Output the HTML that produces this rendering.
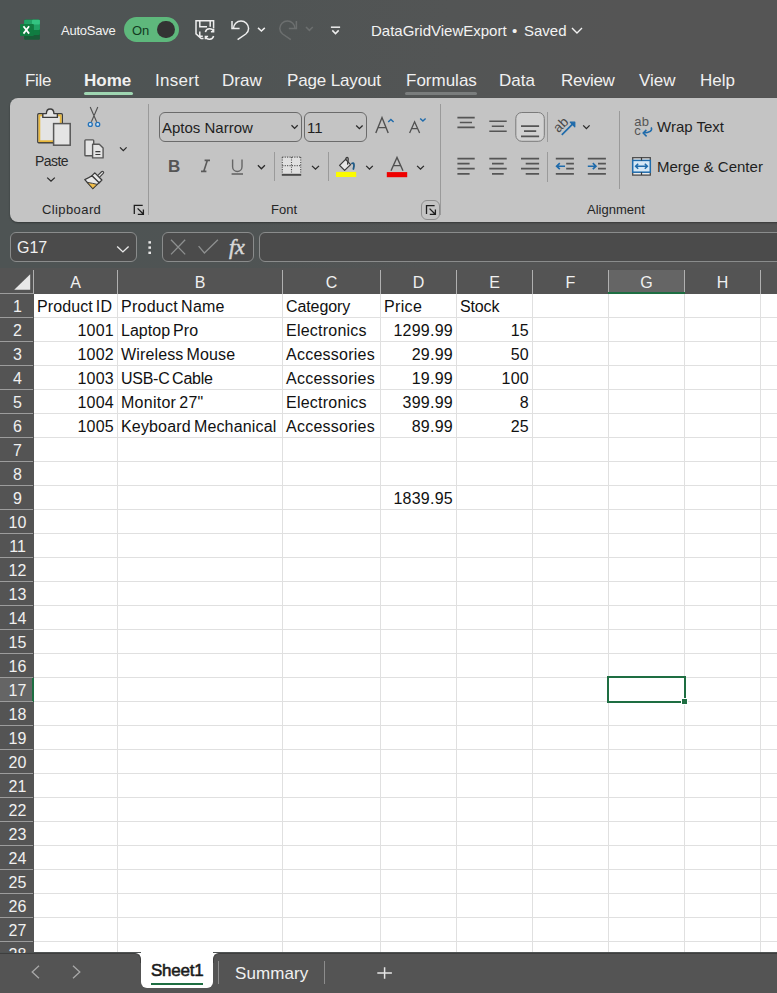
<!DOCTYPE html>
<html><head><meta charset="utf-8">
<style>
*{margin:0;padding:0;box-sizing:border-box}
html,body{width:777px;height:993px;overflow:hidden;background:#4f5353;font-family:"Liberation Sans",sans-serif}
.a{position:absolute;white-space:nowrap}
svg{position:absolute;overflow:visible}
#top{position:absolute;left:0;top:0;width:777px;height:268px;background:linear-gradient(90deg,#4e5454 0px,#4f5454 230px,#535555 450px,#555555 620px,#555555 777px)}
.tab{position:absolute;color:#f0f0f0;font-size:17px;top:71px;white-space:nowrap}
#ribbon{position:absolute;left:10px;top:98px;width:800px;height:124px;background:#c4c4c4;border-radius:8px;box-shadow:0 1px 2px rgba(0,0,0,0.35)}
.rl{position:absolute;color:#262626;font-size:13px;white-space:nowrap}
.rt{position:absolute;color:#1f1f1f;font-size:15px;white-space:nowrap}
.sep{position:absolute;width:1px;background:#9a9a9a}
#grid{position:absolute;left:0;top:270px;width:777px;height:682px;background:#fff}
.vl{position:absolute;top:294px;height:658px;width:1px;background:#e0e0e0}
.hl{position:absolute;left:34px;width:743px;height:1px;background:#e0e0e0}
#colhdr{position:absolute;left:0;top:268px;width:777px;height:26px;background:#545454}
#rowhdr{position:absolute;left:0;top:268px;width:34px;height:684px;background:#545454}
.ch{position:absolute;top:270px;height:24px;color:#f0f0f0;font-size:16px;text-align:center;line-height:26px}
.ch.sel{background:#656565}
.hs{position:absolute;top:270px;height:24px;width:1px;background:#b0b0b0}
.rh{position:absolute;left:1px;width:33px;height:24px;color:#f0f0f0;font-size:16px;text-align:center;line-height:26px}
.rhs{position:absolute;left:0;width:33px;height:1px;background:#9c9c9c}
.c{position:absolute;font-size:16px;color:#111;line-height:24px;white-space:nowrap;letter-spacing:0.25px}
.c.r{text-align:right}
#tabs{position:absolute;left:0;top:952px;width:777px;height:41px;background:#545454}
</style></head><body>
<div id="top"></div>

<!-- title bar -->
<svg style="left:19px;top:19px" width="22" height="22" viewBox="19 19 22 22">
  <rect x="24.1" y="19.8" width="15.8" height="19.9" rx="1.2" fill="#185c37"/>
  <rect x="24.1" y="19.8" width="15.8" height="15.2" rx="1.2" fill="#107c41"/>
  <rect x="24.1" y="19.8" width="15.8" height="10.2" rx="1.2" fill="#21a366"/>
  <rect x="32" y="19.8" width="7.9" height="4.8" rx="1" fill="#33c481"/>
  <rect x="20" y="23.9" width="13.9" height="12.1" rx="1" fill="#107c41"/>
  <path d="M23.5 26.2 L29.1 33.6 M29.1 26.2 L23.5 33.6" stroke="#ffffff" stroke-width="1.75"/>
</svg>
<div class="a" style="left:61px;top:23px;font-size:13px;color:#f2f2f2;letter-spacing:-0.25px">AutoSave</div>
<div class="a" style="left:124px;top:17px;width:55px;height:25px;border-radius:12.5px;background:#5eb87c"></div>
<div class="a" style="left:132px;top:23px;font-size:13px;color:#123c22">On</div>
<div class="a" style="left:157.3px;top:20.8px;width:17.6px;height:17.6px;border-radius:50%;background:#333333"></div>


<svg style="left:192px;top:17px" width="160" height="26" viewBox="192 17 160 26">
  <g stroke="#eeeeee" stroke-width="1.5" fill="none" stroke-linejoin="miter">
    <path d="M203.5 38.6 L201.2 38.6 L196 33.8 V20.8 H213.6 V28.5"/>
    <path d="M199.8 20.8 V26.8 H207 M210.2 20.8 V26.8"/>
    <path d="M199.8 31.5 V36.2 H202.8"/>
    <path d="M205.4 32.2 A4.3 4.3 0 0 1 213.6 31.6 M213.6 29 V31.8 H210.9"/>
    <path d="M213.6 36 A4.3 4.3 0 0 1 205.4 36.6 M205.4 39.2 V36.4 H208.1"/>
  </g>
  <g stroke="#eeeeee" stroke-width="1.5" fill="none">
    <path d="M232 21 V28.6 H239.6"/>
    <path d="M233.4 28.6 A7.6 7.6 0 0 1 248.6 28.6 C248.6 30.8 247.6 32.6 245.8 34 L237.6 39.6"/>
    <path d="M258 27.9 L261.4 31 L264.8 27.9"/>
  </g>
  <g stroke="#6c6f6f" stroke-width="1.5" fill="none">
    <path d="M296.4 21 V28.6 H288.8"/>
    <path d="M295 28.6 A7.6 7.6 0 0 0 279.8 28.6 C279.8 30.8 280.8 32.6 282.6 34 L290.8 39.6"/>
    <path d="M306 27 L309.4 30.4 L312.8 27"/>
  </g>
  <g stroke="#eeeeee" stroke-width="1.5" fill="none">
    <path d="M330.9 27.2 H340.1"/>
    <path d="M332.3 30.4 L335.5 33.6 L338.7 30.4"/>
  </g>
</svg>
<div class="a" style="left:371px;top:22px;font-size:15px;color:#f2f2f2">DataGridViewExport</div>
<div class="a" style="left:512px;top:22px;font-size:15px;color:#f2f2f2">&#8226;</div>
<div class="a" style="left:524px;top:22px;font-size:15px;color:#f2f2f2">Saved</div>
<svg style="left:571px;top:27px" width="12" height="7" viewBox="0 0 12 7"><path d="M1 1 L6 6 L11 1" stroke="#f2f2f2" stroke-width="1.4" fill="none"/></svg>

<div class="tab" style="left:25px;letter-spacing:-0.3px">File</div>
<div class="tab" style="left:84px;font-weight:700">Home</div>
<div class="a" style="left:84px;top:92px;width:49px;height:3px;border-radius:2px;background:#9fd6b2"></div>
<div class="tab" style="left:155px;letter-spacing:0.3px">Insert</div>
<div class="tab" style="left:222px">Draw</div>
<div class="tab" style="left:287px;letter-spacing:-0.15px">Page Layout</div>
<div class="tab" style="left:406px">Formulas</div>
<div class="a" style="left:405px;top:92px;width:72px;height:3px;border-radius:2px;background:#7a7d7d"></div>
<div class="tab" style="left:499px">Data</div>
<div class="tab" style="left:561px;letter-spacing:-0.4px">Review</div>
<div class="tab" style="left:639px">View</div>
<div class="tab" style="left:700px">Help</div>
<div id="grid"></div>
<div id="colhdr"></div>
<div id="rowhdr"></div>
<div class="vl" style="left:117px"></div>
<div class="vl" style="left:282px"></div>
<div class="vl" style="left:380px"></div>
<div class="vl" style="left:456px"></div>
<div class="vl" style="left:532px"></div>
<div class="vl" style="left:608px"></div>
<div class="vl" style="left:684px"></div>
<div class="vl" style="left:760px"></div>
<div class="hl" style="top:317px"></div>
<div class="hl" style="top:341px"></div>
<div class="hl" style="top:365px"></div>
<div class="hl" style="top:389px"></div>
<div class="hl" style="top:413px"></div>
<div class="hl" style="top:437px"></div>
<div class="hl" style="top:461px"></div>
<div class="hl" style="top:485px"></div>
<div class="hl" style="top:509px"></div>
<div class="hl" style="top:533px"></div>
<div class="hl" style="top:557px"></div>
<div class="hl" style="top:581px"></div>
<div class="hl" style="top:605px"></div>
<div class="hl" style="top:629px"></div>
<div class="hl" style="top:653px"></div>
<div class="hl" style="top:677px"></div>
<div class="hl" style="top:701px"></div>
<div class="hl" style="top:725px"></div>
<div class="hl" style="top:749px"></div>
<div class="hl" style="top:773px"></div>
<div class="hl" style="top:797px"></div>
<div class="hl" style="top:821px"></div>
<div class="hl" style="top:845px"></div>
<div class="hl" style="top:869px"></div>
<div class="hl" style="top:893px"></div>
<div class="hl" style="top:917px"></div>
<div class="hl" style="top:941px"></div>
<div class="hl" style="top:965px"></div>
<div class="rh" style="top:294px">1</div>
<div class="rh" style="top:318px">2</div>
<div class="rh" style="top:342px">3</div>
<div class="rh" style="top:366px">4</div>
<div class="rh" style="top:390px">5</div>
<div class="rh" style="top:414px">6</div>
<div class="rh" style="top:438px">7</div>
<div class="rh" style="top:462px">8</div>
<div class="rh" style="top:486px">9</div>
<div class="rh" style="top:510px">10</div>
<div class="rh" style="top:534px">11</div>
<div class="rh" style="top:558px">12</div>
<div class="rh" style="top:582px">13</div>
<div class="rh" style="top:606px">14</div>
<div class="rh" style="top:630px">15</div>
<div class="rh" style="top:654px">16</div>
<div class="a" style="left:0;top:678px;width:34px;height:24px;background:#656565"></div>
<div class="a" style="left:32px;top:678px;width:2px;height:24px;background:#1e6e42"></div>
<div class="rh" style="top:678px">17</div>
<div class="rh" style="top:702px">18</div>
<div class="rh" style="top:726px">19</div>
<div class="rh" style="top:750px">20</div>
<div class="rh" style="top:774px">21</div>
<div class="rh" style="top:798px">22</div>
<div class="rh" style="top:822px">23</div>
<div class="rh" style="top:846px">24</div>
<div class="rh" style="top:870px">25</div>
<div class="rh" style="top:894px">26</div>
<div class="rh" style="top:918px">27</div>
<div class="rh" style="top:942px">28</div>
<div class="rhs" style="top:293px"></div>
<div class="rhs" style="top:317px"></div>
<div class="rhs" style="top:341px"></div>
<div class="rhs" style="top:365px"></div>
<div class="rhs" style="top:389px"></div>
<div class="rhs" style="top:413px"></div>
<div class="rhs" style="top:437px"></div>
<div class="rhs" style="top:461px"></div>
<div class="rhs" style="top:485px"></div>
<div class="rhs" style="top:509px"></div>
<div class="rhs" style="top:533px"></div>
<div class="rhs" style="top:557px"></div>
<div class="rhs" style="top:581px"></div>
<div class="rhs" style="top:605px"></div>
<div class="rhs" style="top:629px"></div>
<div class="rhs" style="top:653px"></div>
<div class="rhs" style="top:677px"></div>
<div class="rhs" style="top:701px"></div>
<div class="rhs" style="top:725px"></div>
<div class="rhs" style="top:749px"></div>
<div class="rhs" style="top:773px"></div>
<div class="rhs" style="top:797px"></div>
<div class="rhs" style="top:821px"></div>
<div class="rhs" style="top:845px"></div>
<div class="rhs" style="top:869px"></div>
<div class="rhs" style="top:893px"></div>
<div class="rhs" style="top:917px"></div>
<div class="rhs" style="top:941px"></div>
<div class="rhs" style="top:965px"></div>
<div class="ch" style="left:34px;width:83px">A</div>
<div class="ch" style="left:118px;width:164px">B</div>
<div class="ch" style="left:283px;width:97px">C</div>
<div class="ch" style="left:381px;width:75px">D</div>
<div class="ch" style="left:457px;width:75px">E</div>
<div class="ch" style="left:533px;width:75px">F</div>
<div class="ch sel" style="left:609px;width:75px">G</div>
<div class="ch" style="left:685px;width:75px">H</div>
<div class="ch" style="left:761px;width:79px">I</div>
<div class="hs" style="left:33px"></div>
<div class="hs" style="left:117px"></div>
<div class="hs" style="left:282px"></div>
<div class="hs" style="left:380px"></div>
<div class="hs" style="left:456px"></div>
<div class="hs" style="left:532px"></div>
<div class="hs" style="left:608px"></div>
<div class="hs" style="left:684px"></div>
<div class="hs" style="left:760px"></div>
<div class="a" style="left:608px;top:292px;width:77px;height:2px;background:#1e6e42"></div>
<div class="c" style="top:295px;left:37px;letter-spacing:0.094px;word-spacing:-1.5px">Product ID</div>
<div class="c" style="top:295px;left:121px;letter-spacing:0.25px;word-spacing:-1.5px">Product Name</div>
<div class="c" style="top:295px;left:286px;letter-spacing:-0.093px;word-spacing:-1.5px">Category</div>
<div class="c" style="top:295px;left:384px;letter-spacing:0.35px;word-spacing:-1.5px">Price</div>
<div class="c" style="top:295px;left:460px;letter-spacing:-0.15px;word-spacing:-1.5px">Stock</div>
<div class="c r" style="top:319px;left:34px;width:80px">1001</div>
<div class="c" style="top:319px;left:121px;letter-spacing:0.028px;word-spacing:-1.5px">Laptop Pro</div>
<div class="c" style="top:319px;left:286px;letter-spacing:0.23px;word-spacing:-1.5px">Electronics</div>
<div class="c r" style="top:319px;left:381px;width:72px">1299.99</div>
<div class="c r" style="top:319px;left:457px;width:72px">15</div>
<div class="c r" style="top:343px;left:34px;width:80px">1002</div>
<div class="c" style="top:343px;left:121px;letter-spacing:0.142px;word-spacing:-1.5px">Wireless Mouse</div>
<div class="c" style="top:343px;left:286px;letter-spacing:0.25px;word-spacing:-1.5px">Accessories</div>
<div class="c r" style="top:343px;left:381px;width:72px">29.99</div>
<div class="c r" style="top:343px;left:457px;width:72px">50</div>
<div class="c r" style="top:367px;left:34px;width:80px">1003</div>
<div class="c" style="top:367px;left:121px;letter-spacing:-0.27px;word-spacing:-1.5px">USB-C Cable</div>
<div class="c" style="top:367px;left:286px;letter-spacing:0.25px;word-spacing:-1.5px">Accessories</div>
<div class="c r" style="top:367px;left:381px;width:72px">19.99</div>
<div class="c r" style="top:367px;left:457px;width:72px">100</div>
<div class="c r" style="top:391px;left:34px;width:80px">1004</div>
<div class="c" style="top:391px;left:121px;letter-spacing:0.25px;word-spacing:-1.5px">Monitor 27&quot;</div>
<div class="c" style="top:391px;left:286px;letter-spacing:0.23px;word-spacing:-1.5px">Electronics</div>
<div class="c r" style="top:391px;left:381px;width:72px">399.99</div>
<div class="c r" style="top:391px;left:457px;width:72px">8</div>
<div class="c r" style="top:415px;left:34px;width:80px">1005</div>
<div class="c" style="top:415px;left:121px;letter-spacing:0.161px;word-spacing:-1.5px">Keyboard Mechanical</div>
<div class="c" style="top:415px;left:286px;letter-spacing:0.25px;word-spacing:-1.5px">Accessories</div>
<div class="c r" style="top:415px;left:381px;width:72px">89.99</div>
<div class="c r" style="top:415px;left:457px;width:72px">25</div>
<div class="c r" style="top:487px;left:381px;width:72px">1839.95</div>
<div id="ribbon"></div>
<!-- Clipboard group -->
<svg style="left:36px;top:107px" width="36" height="40" viewBox="36 107 36 40">
  <rect x="37.8" y="113.8" width="24.5" height="29" rx="1" fill="#e4e4e4" stroke="#3c3c3c" stroke-width="1.4"/>
  <rect x="39.4" y="115.4" width="21.3" height="25.8" fill="none" stroke="#e8b73a" stroke-width="1.8"/>
  <path d="M42.8 117.4 V113.6 H46.4 C46.4 107.4 53.9 107.4 53.9 113.6 H57.4 V117.4 Z" fill="#e4e4e4" stroke="#3c3c3c" stroke-width="1.4" stroke-linejoin="round"/>
  <rect x="53.6" y="123.6" width="16.6" height="21.6" fill="#e4e4e4" stroke="#575757" stroke-width="1.5"/>
</svg>
<div class="rl" style="left:35px;top:153px;font-size:14px;color:#2a2a2a;letter-spacing:-0.55px">Paste</div>
<svg style="left:46px;top:176px" width="10" height="7" viewBox="0 0 10 7"><path d="M1.2 1.6 L5 5.2 L8.8 1.6" stroke="#2a2a2a" stroke-width="1.3" fill="none"/></svg>

<svg style="left:86px;top:105px" width="16" height="24" viewBox="86 105 16 24">
  <path d="M90.2 107 L96.6 121.8 M97.8 107 L91.4 121.8" stroke="#505050" stroke-width="1.1" fill="none"/>
  <circle cx="90.3" cy="124.4" r="2" fill="#cfe2f3" stroke="#2472b8" stroke-width="1.3"/>
  <circle cx="97.7" cy="124.4" r="2" fill="#cfe2f3" stroke="#2472b8" stroke-width="1.3"/>
</svg>
<svg style="left:82px;top:137px" width="24" height="24" viewBox="82 137 24 24">
  <rect x="84.9" y="139.9" width="8.8" height="15.9" rx="0.8" fill="#e4e4e4" stroke="#575757" stroke-width="1.4"/>
  <path d="M92.6 157.9 V144.2 H99.3 L103.1 148 V157.9 Z" fill="#e4e4e4" stroke="#575757" stroke-width="1.4" stroke-linejoin="round"/>
  <path d="M95.4 151.6 H100.4 M95.4 154.5 H100.4" stroke="#3a3a3a" stroke-width="1.1"/>
</svg>
<svg style="left:118px;top:145px" width="10" height="8" viewBox="0 0 10 8"><path d="M2 2.4 L5.3 5.6 L8.6 2.4" stroke="#2a2a2a" stroke-width="1.3" fill="none"/></svg>
<svg style="left:82px;top:169px" width="24" height="23" viewBox="82 169 24 23">
  <path d="M98.2 176.8 L102.4 172.6" stroke="#444" stroke-width="3.6" stroke-linecap="round"/>
  <path d="M98.2 176.8 L102.4 172.6" stroke="#e6e6e6" stroke-width="1.3" stroke-linecap="round"/>
  <path d="M92 175.8 C89.2 177.6 86.8 178.8 84.8 179.6 L92.8 188.6 L99.2 182.6 Z" fill="#e8e8e8" stroke="#3a3a3a" stroke-width="1.3" stroke-linejoin="round"/>
  <path d="M87.2 182.4 C90.8 183 94.2 183.6 97.3 184.4 L92.8 188.6 Z" fill="#f0bd4a" stroke="#3a3a3a" stroke-width="1" stroke-linejoin="round"/>
  <path d="M92 175.6 L94.8 172.9 L101.9 180 L99.2 182.7 Z" fill="#e8e8e8" stroke="#3a3a3a" stroke-width="1.3" stroke-linejoin="round"/>
</svg>
<div class="rl" style="left:42px;top:202px;letter-spacing:0.4px">Clipboard</div>
<svg style="left:132px;top:203px" width="14" height="14" viewBox="132 203 14 14">
  <path d="M134.3 214 V205.4 H142.7 M137.6 208.4 L143 213.8 M143.4 209.4 V214.4 H137.8" fill="none" stroke="#1e1e1e" stroke-width="1.3"/>
</svg>
<div class="sep" style="left:148px;top:104px;height:111px"></div>

<!-- Font group -->
<div class="a" style="left:159px;top:112px;width:143px;height:30px;border:1px solid #6b6b6b;border-radius:6px"></div>
<div class="rt" style="left:162px;top:119px">Aptos Narrow</div>
<svg style="left:290px;top:123px" width="10" height="8" viewBox="0 0 10 8"><path d="M1.5 2.3 L4.6 5.4 L7.7 2.3" stroke="#2a2a2a" stroke-width="1.3" fill="none"/></svg>
<div class="a" style="left:304px;top:112px;width:63px;height:30px;border:1px solid #6b6b6b;border-radius:6px"></div>
<div class="rt" style="left:307px;top:119px">11</div>
<svg style="left:355px;top:123px" width="10" height="8" viewBox="0 0 10 8"><path d="M1.2 2.5 L4.4 5.7 L7.6 2.5" stroke="#2a2a2a" stroke-width="1.3" fill="none"/></svg>
<svg style="left:374px;top:116px" width="22" height="18" viewBox="374 116 22 18">
  <path d="M375.8 133 L382 117.6 L388.2 133 M378 127.6 H386" stroke="#505050" stroke-width="1.4" fill="none"/>
  <path d="M388.2 122 L390.9 119.5 L393.6 122" stroke="#1f6bab" stroke-width="1.4" fill="none"/>
</svg>
<svg style="left:407px;top:116px" width="22" height="18" viewBox="407 116 22 18">
  <path d="M409.6 133 L414.6 121.8 L419.6 133 M411.4 128.6 H417.8" stroke="#505050" stroke-width="1.3" fill="none"/>
  <path d="M420.2 118.4 L422.9 121 L425.6 118.4" stroke="#1f6bab" stroke-width="1.4" fill="none"/>
</svg>

<div class="a" style="left:168px;top:157px;font-size:17px;font-weight:700;color:#555;letter-spacing:0">B</div>
<svg style="left:198px;top:157px" width="14" height="17" viewBox="198 157 14 17">
  <path d="M204.6 160.4 H210 M201 171.4 H206.4 M207.3 160.4 L203.7 171.4" stroke="#5a5a5a" stroke-width="1.6" fill="none"/>
</svg>
<svg style="left:229px;top:157px" width="16" height="20" viewBox="229 157 16 20">
  <path d="M232.6 159.4 V166.8 A4.7 4.7 0 0 0 242 166.8 V159.4" stroke="#666" stroke-width="1.4" fill="none"/>
  <path d="M231.6 174 H243" stroke="#666" stroke-width="1.6"/>
</svg>
<svg style="left:256px;top:163px" width="10" height="8" viewBox="0 0 10 8"><path d="M1.9 2.3 L5.4 5.8 L8.9 2.3" stroke="#2a2a2a" stroke-width="1.3" fill="none"/></svg>
<div class="sep" style="left:274px;top:152px;height:29px"></div>
<svg style="left:280px;top:155px" width="23" height="22" viewBox="280 155 23 22">
  <rect x="282.3" y="157.1" width="18.4" height="17" fill="#e0e0e0"/>
  <path d="M282.3 157.1 H300.7 M282.3 157.1 V174.1 M300.7 157.1 V174.1 M291.5 157.1 V174.1 M282.3 165.6 H300.7" stroke="#555" stroke-width="1.1" stroke-dasharray="1.1 1.3" fill="none"/>
  <path d="M281.8 174.8 H301.2" stroke="#4a4a4a" stroke-width="2"/>
</svg>
<svg style="left:310px;top:163px" width="10" height="8" viewBox="0 0 10 8"><path d="M2 2.9 L5.5 6.2 L9 2.9" stroke="#2a2a2a" stroke-width="1.3" fill="none"/></svg>
<div class="sep" style="left:328px;top:152px;height:29px"></div>
<svg style="left:334px;top:156px" width="24" height="23" viewBox="334 156 24 23">
  <path d="M339.6 165.4 L345.6 159.4 L350.6 164.6 L344.6 170.4 Z" fill="#e6e6e6" stroke="#3a3a3a" stroke-width="1.3" stroke-linejoin="round"/>
  <path d="M345.8 159.6 C345.9 156.6 348.4 156.6 348.2 159.6 L347.6 164.2" stroke="#3a3a3a" stroke-width="1.3" fill="none" stroke-linecap="round"/>
  <path d="M352 163.4 C353.8 162.2 354.8 164.4 353.4 169" stroke="#1f5a86" stroke-width="1.8" fill="none" stroke-linecap="round"/>
  <rect x="336" y="171.9" width="20.2" height="5.1" fill="#fbfb00"/>
</svg>
<svg style="left:364px;top:163px" width="10" height="8" viewBox="0 0 10 8"><path d="M2.2 2.9 L5.5 6.2 L8.8 2.9" stroke="#2a2a2a" stroke-width="1.3" fill="none"/></svg>
<svg style="left:385px;top:156px" width="24" height="23" viewBox="385 156 24 23">
  <path d="M391 170.7 L397 157.4 L403 170.7 M393.2 165.6 H400.8" stroke="#505050" stroke-width="1.4" fill="none"/>
  <rect x="386.8" y="172.1" width="20.4" height="5.1" fill="#ee0000"/>
</svg>
<svg style="left:415px;top:163px" width="10" height="8" viewBox="0 0 10 8"><path d="M2.1 2.9 L5.5 6.2 L8.9 2.9" stroke="#2a2a2a" stroke-width="1.3" fill="none"/></svg>
<div class="rl" style="left:271px;top:202px">Font</div>
<div class="a" style="left:421px;top:200px;width:19px;height:20px;border:1px solid #8e8e8e;border-radius:6px"></div>
<svg style="left:424px;top:203px" width="14" height="14" viewBox="424 203 14 14">
  <path d="M426.5 214 V205.6 H434.6 M429.6 208.6 L435 214 M435.4 209.6 V214.4 H429.8" fill="none" stroke="#1e1e1e" stroke-width="1.3"/>
</svg>
<div class="sep" style="left:440px;top:104px;height:111px"></div>

<!-- Alignment group -->
<svg style="left:450px;top:108px" width="170" height="76" viewBox="450 108 170 76">
  <g stroke="#555" stroke-width="1.6" fill="none">
    <path d="M457.4 117.6 H474.7 M459.8 122.5 H472 M457.4 127.4 H474.7"/>
    <path d="M489.3 121.3 H506.7 M491.8 126.2 H504 M489.3 131.2 H506.7"/>
  </g>
  <rect x="515.8" y="112.5" width="28.5" height="28.8" rx="6" fill="#d2d2d2" stroke="#7a7a7a" stroke-width="1"/>
  <g stroke="#555" stroke-width="1.8" fill="none">
    <path d="M521 126.2 H539.1 M524 131.1 H536.2 M521 136.3 H539.1"/>
    <path d="M457.4 158.7 H474.7 M457.4 163.6 H469.6 M457.4 168.7 H474.7 M457.4 173.8 H469.6"/>
    <path d="M489.3 158.7 H506.7 M492 163.6 H503.7 M489.3 168.7 H506.7 M492 173.8 H503.7"/>
    <path d="M521 158.7 H539.1 M525.7 163.6 H539.1 M521 168.7 H539.1 M525.7 173.8 H539.1"/>
    <path d="M555.8 158.7 H573.9 M566.2 163.6 H573.9 M566.2 168.7 H573.9 M555.8 173.8 H573.9"/>
    <path d="M587.8 158.7 H605.9 M598 163.6 H605.9 M598 168.7 H605.9 M587.8 173.8 H605.9"/>
  </g>
  <g stroke="#1f6bab" stroke-width="1.6" fill="none">
    <path d="M565 166.2 H556.6 M559.8 163.2 L556.6 166.2 L559.8 169.2"/>
    <path d="M587.8 166.2 H596 M592.8 163.2 L596 166.2 L592.8 169.2"/>
    <path d="M561.8 134.8 L572.8 123.9" stroke="#1f6bab" stroke-width="1.7"/><path d="M570.2 122.2 H574.8 V126.8 Z" fill="#1f6bab" stroke="#1f6bab" stroke-width="1.2" stroke-linejoin="round"/>
  </g>
  <text x="0" y="0" font-size="13.5" fill="#4a4a4a" font-family="Liberation Sans" transform="translate(558.6 133.2) rotate(-45)">ab</text>
</svg>
<div class="sep" style="left:547px;top:112px;height:30px"></div>
<div class="sep" style="left:547px;top:152px;height:30px"></div>
<svg style="left:581px;top:123px" width="10" height="8" viewBox="0 0 10 8"><path d="M2.2 2.4 L5.4 5.6 L8.6 2.4" stroke="#2a2a2a" stroke-width="1.3" fill="none"/></svg>
<div class="sep" style="left:619px;top:111px;height:78px"></div>
<svg style="left:632px;top:115px" width="22" height="24" viewBox="632 115 22 24">
  <text x="634.2" y="126.3" font-size="13" fill="#555" font-family="Liberation Sans" letter-spacing="0.3">ab</text>
  <text x="634.2" y="135.3" font-size="13" fill="#555" font-family="Liberation Sans">c</text>
  <path d="M651.2 127.4 C652.8 130.6 649.6 133 643.2 133.1 M646.4 129.9 L643.2 133.1 L646.6 136.4" stroke="#1f6bab" stroke-width="1.5" fill="none"/>
</svg>
<div class="rt" style="left:657px;top:118px">Wrap Text</div>
<svg style="left:630px;top:155px" width="24" height="23" viewBox="630 155 24 23">
  <rect x="632.7" y="157.7" width="17.6" height="17.4" fill="#ececec" stroke="#4a4a4a" stroke-width="1.3"/>
  <rect x="632.7" y="160.4" width="17.6" height="11.8" fill="#d6e8f6" stroke="#1f6bab" stroke-width="1.5"/>
  <path d="M641.5 157.6 V160.4 M641.5 172.2 V175" stroke="#3a3a3a" stroke-width="1.2"/>
  <path d="M635.6 166.3 H647.4 M638.2 163.8 L635.6 166.3 L638.2 168.8 M644.8 163.8 L647.4 166.3 L644.8 168.8" stroke="#1f6bab" stroke-width="1.5" fill="none"/>
</svg>
<div class="rt" style="left:657px;top:158px">Merge &amp; Center</div>
<div class="rl" style="left:587px;top:202px">Alignment</div>

<!-- Formula bar -->
<div class="a" style="left:10px;top:232px;width:127px;height:30px;border:1px solid #8a8c8c;border-radius:6px;background:#4b4b4b"></div>
<div class="a" style="left:17px;top:239px;font-size:16px;color:#f0f0f0">G17</div>
<svg style="left:115px;top:243px" width="16" height="12" viewBox="0 0 16 12"><path d="M2.2 3.4 L7.9 8.9 L13.6 3.4" stroke="#e8e8e8" stroke-width="1.4" fill="none"/></svg>
<svg style="left:146px;top:239px" width="8" height="17" viewBox="0 0 8 17">
  <rect x="2.4" y="2.2" width="2.6" height="2.4" fill="#e8e8e8"/><rect x="2.4" y="7.4" width="2.6" height="2.4" fill="#e8e8e8"/><rect x="2.4" y="12.6" width="2.6" height="2.4" fill="#e8e8e8"/>
</svg>
<div class="a" style="left:162px;top:232px;width:92px;height:30px;border:1px solid #8a8c8c;border-radius:6px;background:#4b4b4b"></div>
<svg style="left:168px;top:238px" width="54" height="20" viewBox="168 238 54 20">
  <path d="M171 239.8 L185.2 254.4 M185.2 239.8 L171 254.4" stroke="#8e9090" stroke-width="1.3"/>
  <path d="M198.6 246.2 L204.4 253 L217.9 239.8" stroke="#8e9090" stroke-width="1.3" fill="none"/>
</svg>
<div class="a" style="left:229px;top:234px;font-family:'Liberation Serif',serif;font-style:italic;font-weight:400;font-size:22px;-webkit-text-stroke:0.5px #d8d8d8;color:#d8d8d8">fx</div>
<div class="a" style="left:259px;top:232px;width:540px;height:30px;border:1px solid #8a8c8c;border-radius:6px;background:#4b4b4b"></div>

<!-- select-all triangle -->
<svg style="left:13px;top:273px" width="19" height="18" viewBox="13 273 19 18"><path d="M30.2 274.2 V289.8 H14.2 Z" fill="#e8e8e8"/></svg>

<div class="a" style="left:0;top:953px;width:777px;height:40px;background:#545454;border-top:1px solid #3e3e3e"></div>
<div class="a" style="left:141px;top:952px;width:72px;height:36px;background:#fff;border-radius:0 0 6px 6px"></div>
<div class="a" style="left:131px;top:953px;width:10px;height:10px;background:#fff"></div>
<div class="a" style="left:131px;top:953px;width:10px;height:10px;background:#545454;border-top-right-radius:6px;border-top:1px solid #3e3e3e;border-right:1px solid #3e3e3e"></div>
<div class="a" style="left:213px;top:953px;width:10px;height:10px;background:#fff"></div>
<div class="a" style="left:213px;top:953px;width:10px;height:10px;background:#545454;border-top-left-radius:6px;border-top:1px solid #3e3e3e;border-left:1px solid #3e3e3e"></div>
<svg style="left:28px;top:963px" width="56" height="18" viewBox="28 963 56 18">
  <path d="M39 965.8 L32.2 972 L39 978.2" stroke="#a8a8a8" stroke-width="1.3" fill="none"/>
  <path d="M73 965.8 L79.8 972 L73 978.2" stroke="#a8a8a8" stroke-width="1.3" fill="none"/>
</svg>
<div class="a" style="left:151px;top:961px;font-size:17px;letter-spacing:-0.25px;-webkit-text-stroke:0.55px #1a1a1a;color:#1a1a1a">Sheet1</div>
<div class="a" style="left:151px;top:983px;width:52px;height:2px;background:#1e6e42"></div>
<div class="a" style="left:218px;top:961px;width:1px;height:23px;background:#8c8c8c"></div>
<div class="a" style="left:235px;top:964px;font-size:17px;color:#f0f0f0;letter-spacing:0.1px">Summary</div>
<div class="a" style="left:324px;top:961px;width:1px;height:23px;background:#8c8c8c"></div>
<svg style="left:375px;top:964px" width="19" height="17" viewBox="375 964 19 17">
  <path d="M377.3 973 H391.9 M384.6 967.2 V978.8" stroke="#e6e6e6" stroke-width="1.5"/>
</svg>
<div class="a" style="left:607px;top:676px;width:79px;height:27px;border:2px solid #1e6e42"></div>
<div class="a" style="left:681px;top:698px;width:7px;height:7px;background:#fff"></div>
<div class="a" style="left:682px;top:699px;width:5px;height:5px;background:#1e6e42"></div>

</body></html>
